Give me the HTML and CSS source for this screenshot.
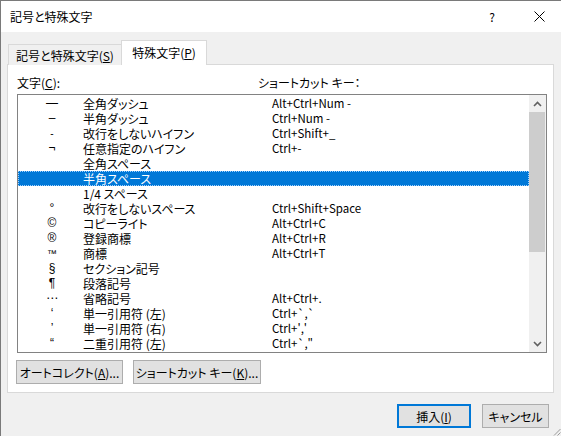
FILE: index.html
```html
<!DOCTYPE html>
<html lang="ja">
<head>
<meta charset="utf-8">
<title>記号と特殊文字</title>
<link rel="stylesheet" href="styles.css">
</head>
<body>
<div class="window">
  <div class="titlebar">
    <span class="title">記号と特殊文字</span>
    <span class="help">?</span>
    <span class="close">
      <svg width="11" height="11" viewBox="0 0 11 11"><path d="M0.5 0.5 L10.5 10.5 M10.5 0.5 L0.5 10.5" stroke="#000" stroke-width="1" fill="none"/></svg>
    </span>
  </div>
  <div class="content">
    <div class="tabs">
      <div class="tab">記号と特殊文字(<u>S</u>)</div>
      <div class="tab active">特殊文字(<u>P</u>)</div>
    </div>
    <div class="panel">
      <div class="labels">
        <span class="lbl-char">文字(<u>C</u>):</span>
        <span class="lbl-key">ショートカット キー：</span>
      </div>
      <div class="list">
        <div class="rows">
          <div class="row"><span class="sym">—</span><span class="name">全角ダッシュ</span><span class="key">Alt+Ctrl+Num -</span></div>
          <div class="row"><span class="sym">–</span><span class="name">半角ダッシュ</span><span class="key">Ctrl+Num -</span></div>
          <div class="row"><span class="sym small">-</span><span class="name">改行をしないハイフン</span><span class="key">Ctrl+Shift+_</span></div>
          <div class="row"><span class="sym">¬</span><span class="name">任意指定のハイフン</span><span class="key">Ctrl+-</span></div>
          <div class="row"><span class="sym"></span><span class="name">全角スペース</span><span class="key"></span></div>
          <div class="row selected"><span class="sym"></span><span class="name">半角スペース</span><span class="key"></span></div>
          <div class="row"><span class="sym"></span><span class="name">1/4 スペース</span><span class="key"></span></div>
          <div class="row"><span class="sym">°</span><span class="name">改行をしないスペース</span><span class="key">Ctrl+Shift+Space</span></div>
          <div class="row"><span class="sym">©</span><span class="name">コピーライト</span><span class="key">Alt+Ctrl+C</span></div>
          <div class="row"><span class="sym">®</span><span class="name">登録商標</span><span class="key">Alt+Ctrl+R</span></div>
          <div class="row"><span class="sym tm">™</span><span class="name">商標</span><span class="key">Alt+Ctrl+T</span></div>
          <div class="row"><span class="sym">§</span><span class="name">セクション記号</span><span class="key"></span></div>
          <div class="row"><span class="sym">¶</span><span class="name">段落記号</span><span class="key"></span></div>
          <div class="row"><span class="sym">⋯</span><span class="name">省略記号</span><span class="key">Alt+Ctrl+.</span></div>
          <div class="row"><span class="sym">‘</span><span class="name">単一引用符 (左)</span><span class="key">Ctrl+`,`</span></div>
          <div class="row"><span class="sym">’</span><span class="name">単一引用符 (右)</span><span class="key">Ctrl+','</span></div>
          <div class="row"><span class="sym">“</span><span class="name">二重引用符 (左)</span><span class="key">Ctrl+`,"</span></div>
        </div>
        <div class="scrollbar">
          <div class="sb-btn">
            <svg width="9" height="6" viewBox="0 0 9 6"><path d="M1 5 L4.5 1.5 L8 5" stroke="#606060" stroke-width="1.6" fill="none"/></svg>
          </div>
          <div class="sb-track">
            <div class="sb-thumb"></div>
          </div>
          <div class="sb-btn">
            <svg width="9" height="6" viewBox="0 0 9 6"><path d="M1 1 L4.5 4.5 L8 1" stroke="#606060" stroke-width="1.6" fill="none"/></svg>
          </div>
        </div>
      </div>
      <div class="panel-buttons">
        <button class="btn btn-auto">オートコレクト(<u>A</u>)...</button>
        <button class="btn btn-key">ショートカット キー(<u>K</u>)...</button>
      </div>
    </div>
    <div class="dialog-buttons">
      <button class="btn btn-insert">挿入(<u>I</u>)</button>
      <button class="btn btn-cancel">キャンセル</button>
    </div>
  </div>
  <svg class="grip" width="8" height="8" viewBox="0 0 8 8"><path d="M7.5 1 L1 7.5 M7.5 4.5 L4.5 7.5" stroke="#9a9a9a" stroke-width="1" fill="none"/></svg>
</div>
</body>
</html>
```

FILE: styles.css
```css
* { box-sizing: border-box; }
html, body { margin: 0; padding: 0; }
body {
  width: 561px;
  height: 436px;
  overflow: hidden;
  font-family: "Noto Sans CJK JP", "Noto Sans", sans-serif;
  font-size: 12px;
  font-feature-settings: "palt";
  color: #000;
  background: #f0f0f0;
}
u { text-decoration: underline; text-underline-offset: 1px; }

.window {
  position: relative;
  width: 561px;
  height: 436px;
  border-top: 1px solid #7a7a7a;
  border-left: 1px solid #7a7a7a;
  background: #f0f0f0;
}

.titlebar {
  height: 31px;
  background: #fff;
  display: flex;
  align-items: center;
  padding-left: 9px;
}
.title { flex: 1; line-height: 16px; }
.help { width: 12px; text-align: center; margin-right: 36px; font-size: 12px; }
.close { display: flex; margin-right: 16px; }

.content {
  padding: 8px 0 0 6px;
}

.tabs {
  display: flex;
  align-items: flex-end;
  height: 25px;
  margin-left: 1px;
  margin-bottom: -1px;
}
.tab {
  height: 21px;
  width: 113px;
  border: 1px solid #d9d9d9;
  border-bottom: none;
  border-right: none;
  background: #f0f0f0;
  display: flex;
  align-items: center;
  justify-content: center;
  line-height: 15px;
  padding-top: 1px;
}
.tab.active {
  height: 25px;
  width: 86px;
  background: #fff;
  border-right: 1px solid #d9d9d9;
  position: relative;
  z-index: 1;
  padding-top: 0;
  padding-bottom: 2px;
}

.panel {
  width: 547px;
  height: 329px;
  background: #fff;
  border: 1px solid #d9d9d9;
  padding: 10px 6px 8px 9px;
}

.labels {
  display: flex;
  height: 15px;
  line-height: 15px;
  margin-bottom: 4px;
}
.lbl-char { width: 241px; }

.list {
  width: 530px;
  height: 259px;
  border: 1px solid #828282;
  display: flex;
  overflow: hidden;
}
.rows {
  flex: 1;
  padding-top: 1px;
  overflow: hidden;
}
.row {
  display: grid;
  grid-template-columns: 65px 189px 1fr;
  height: 15px;
  line-height: 15px;
  white-space: nowrap;
}
.row .sym {
  text-align: center;
  padding-left: 3px;
  font-family: "Liberation Sans", "DejaVu Sans", sans-serif;
  font-size: 12px;
}
.row .sym.small { font-size: 10px; }
.row .sym.tm { font-size: 10px; }
.row .key { font-size: 11.5px; }
.row.selected {
  background: #0078d7;
  color: #fff;
  outline: 1px dotted #9fd0ff;
  outline-offset: -1px;
}

.scrollbar {
  width: 17px;
  display: flex;
  flex-direction: column;
  background: #f0f0f0;
}
.sb-btn {
  height: 17px;
  display: flex;
  align-items: center;
  justify-content: center;
}
.sb-track { flex: 1; }
.sb-thumb {
  height: 140px;
  width: 16px;
  background: #cdcdcd;
}

.panel-buttons {
  display: flex;
  gap: 10px;
  margin-top: 7px;
  margin-left: -1px;
}
.btn {
  font: inherit;
  font-feature-settings: "palt";
  color: #000;
  height: 24px;
  background: #e1e1e1;
  border: 1px solid #adadad;
  padding: 0;
  line-height: 15px;
  margin: 0;
}
.btn-auto { width: 107px; }
.btn-key { width: 128px; }

.dialog-buttons {
  display: flex;
  justify-content: flex-end;
  gap: 11px;
  margin-top: 11px;
  padding-right: 12px;
}
.btn-insert { width: 74px; border: 2px solid #0078d7; }
.btn-cancel { width: 67px; }

.grip {
  position: absolute;
  right: 0;
  bottom: 0;
}
```
